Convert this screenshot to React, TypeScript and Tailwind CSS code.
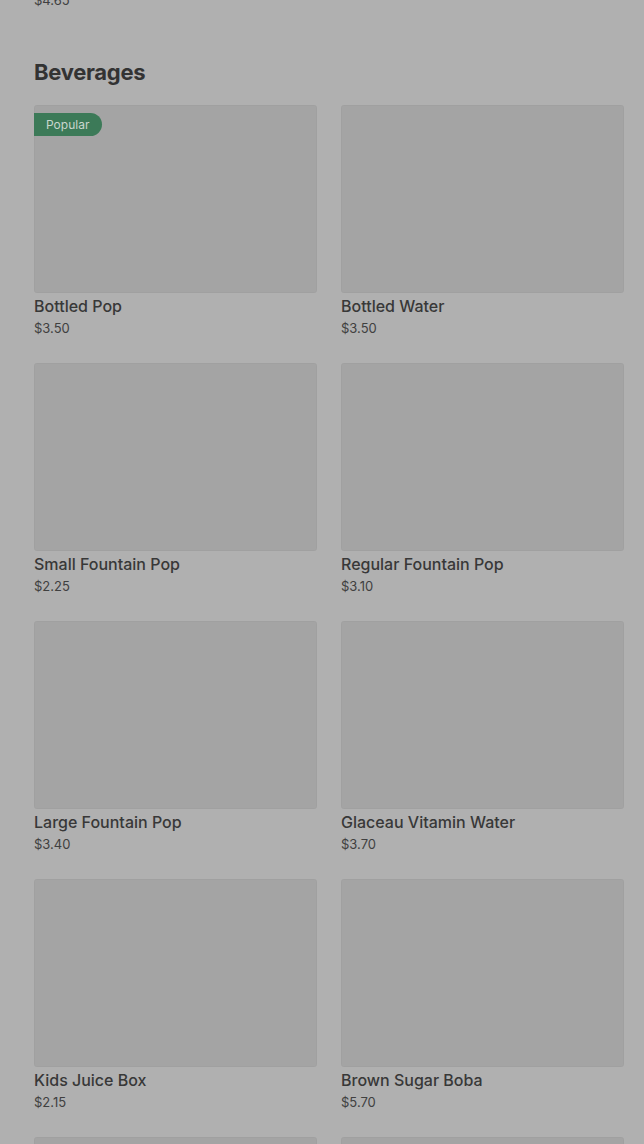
const ITEMS = [
  { name: "Bottled Pop", price: "$3.50", badge: "Popular" },
  { name: "Bottled Water", price: "$3.50" },
  { name: "Small Fountain Pop", price: "$2.25" },
  { name: "Regular Fountain Pop", price: "$3.10" },
  { name: "Large Fountain Pop", price: "$3.40" },
  { name: "Glaceau Vitamin Water", price: "$3.70" },
  { name: "Kids Juice Box", price: "$2.15" },
  { name: "Brown Sugar Boba", price: "$5.70" },
];

function MenuCard({ name, price, badge }: { name?: string; price?: string; badge?: string }) {
  return (
    <div>
      <div className="relative h-[188px] rounded-[3px] bg-[#a4a4a4] shadow-[inset_0_0_0_1px_rgba(0,0,0,0.02)]">
        {badge && (
          <span className="absolute left-0 top-2 flex h-[23px] items-center rounded-r-full bg-[#3c7a58] pl-3 pr-[13px] text-[12px] text-[#c9d6ce]">
            {badge}
          </span>
        )}
      </div>
      {name && <div className="mt-px text-[16px] font-medium leading-6 text-[#383838]">{name}</div>}
      {price && <div className="text-[13px] leading-[21px] text-[#404040]">{price}</div>}
    </div>
  );
}

export default function App() {
  return (
    <main
      className="h-[1144px] overflow-hidden bg-[#b0b0b0] pl-[34px] pr-5"
      style={{ fontFamily: "Inter, 'Noto Sans', sans-serif" }}
    >
      <div className="-mt-[10px] text-[13px] leading-5 text-[#404040]">$4.65</div>
      <h2 className="mt-12 text-[22px] font-bold leading-7 tracking-[-0.3px] text-[#333333]">Beverages</h2>
      <div className="mt-[19px] grid grid-cols-2 gap-x-6 gap-y-6">
        {ITEMS.map((item) => (
          <MenuCard key={item.name} {...item} />
        ))}
        {/* next row continues below the fold */}
        <MenuCard />
        <MenuCard />
      </div>
    </main>
  );
}
